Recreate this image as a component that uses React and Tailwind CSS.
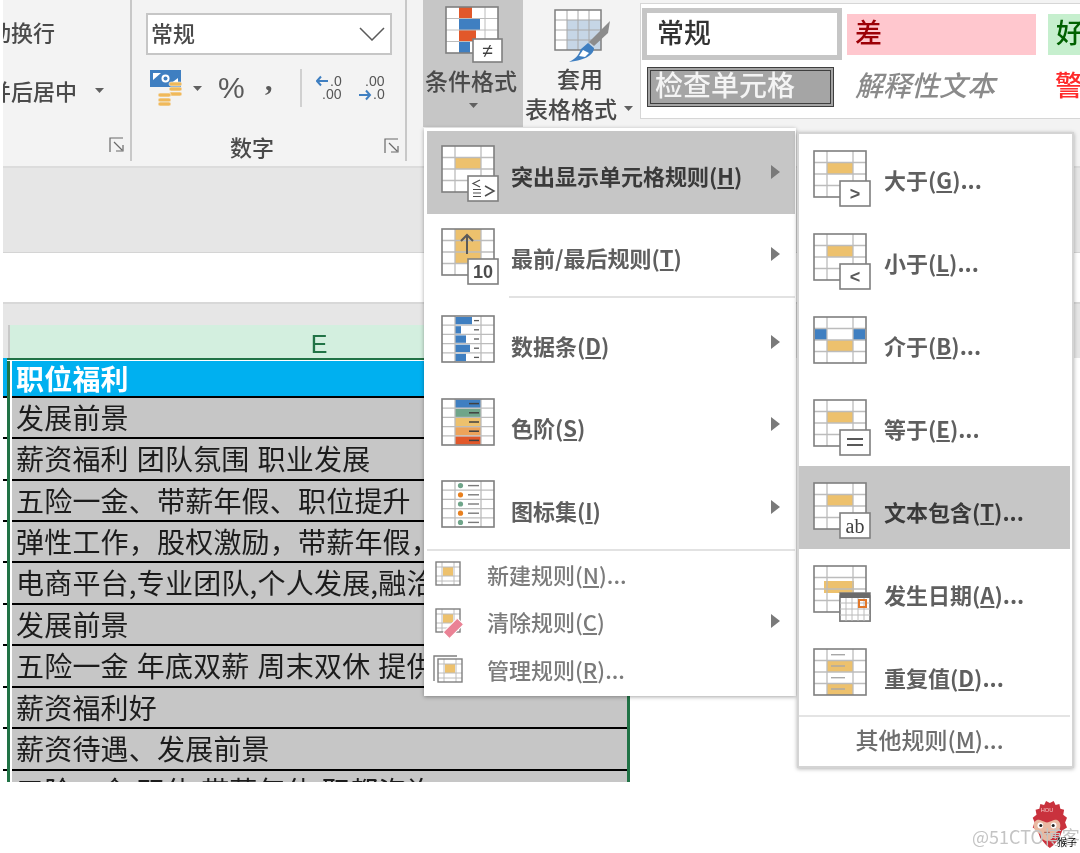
import React from "react";

const GRAY = "#7f7f7f", LINE = "#bcbcbc", OR = "#edc16d", BL = "#3f7fc1", RED = "#e2582a";
const SVGFONT = "'Liberation Sans', sans-serif";

function Grid({ rows = 4, children, over }) {
  const ys = Array.from({ length: rows - 1 }, (_, i) => ((i + 1) * 46) / rows);
  return (
    <svg width="60" height="60" viewBox="0 0 60 60" className="shrink-0 overflow-visible">
      <g transform="translate(1,4)">
        <rect x="0" y="0" width="52" height="46" fill="#fff" />
        {children && children[0]}
        {ys.map((y) => <line key={y} x1="0" x2="52" y1={y} y2={y} stroke={LINE} strokeWidth="1.3" />)}
        <line x1="13" x2="13" y1="0" y2="46" stroke={LINE} strokeWidth="1.3" />
        <line x1="39" x2="39" y1="0" y2="46" stroke={LINE} strokeWidth="1.3" />
        {children && children[1]}
        <rect x="0" y="0" width="52" height="46" fill="none" stroke={GRAY} strokeWidth="1.6" />
        {over && (
          <g>
            <rect x="26" y="30" width="30" height="25" fill="#fff" stroke={GRAY} strokeWidth="1.6" />
            {over}
          </g>
        )}
      </g>
    </svg>
  );
}

const Hl = <rect x="13" y="11.5" width="26" height="11.5" fill={OR} />;

const Glyph = ({ t, x = 41, y = 49, s = 17, fam, fw = 400, fill = "#4d4d4d" }) => (
  <text x={x} y={y} fontSize={s} fontFamily={fam || SVGFONT} fontWeight={fw} fill={fill} textAnchor="middle">{t}</text>
);

const IconHighlight = () => (
  <Grid over={<><path d="M38 34l-7 3.500 7 3.500M31 43.500h8M31 47h8M31 50.500h8" fill="none" stroke="#4d4d4d" strokeWidth="1.2" /><path d="M43 40l9 5-9 5" fill="none" stroke="#4d4d4d" strokeWidth="1.500" /></>}>
    {[Hl, null]}
  </Grid>
);
const IconTop = () => (
  <Grid over={<Glyph t="10" y={49} s={18} fw={700} />}>
    {[<rect key="a" x="13" y="0" width="26" height="35" fill={OR} />,
      <path key="b" d="M25 25V6M19 12l6-6 6 6" stroke="#595959" strokeWidth="2" fill="none" />]}
  </Grid>
);
const IconBars = () => (
  <Grid rows={5}>
    {[<g key="a">
        {[[17], [6], [11], [15], [11]].map(([w], i) => <rect key={i} x="13" y={i * 9.2 + 1} width={w} height="7.4" fill={BL} />)}
      </g>,
      <g key="b">{[0, 1, 2, 3, 4].map((i) => <line key={i} x1="32" x2="37" y1={i * 9.2 + 4.6} y2={i * 9.2 + 4.6} stroke="#595959" strokeWidth="1.3" />)}</g>]}
  </Grid>
);
const IconScale = () => (
  <Grid rows={5}>
    {[<g key="a">{[BL, "#6fa58a", OR, "#eda35a", RED].map((c, i) => <rect key={i} x="13" y={i * 9.2 + 0.5} width="26" height="8.4" fill={c} />)}</g>,
      <g key="b">{[0, 1, 2, 3, 4].map((i) => <line key={i} x1="27" x2="37" y1={i * 9.2 + 4.6} y2={i * 9.2 + 4.6} stroke="#404040" strokeWidth="1.5" />)}</g>]}
  </Grid>
);
const IconSets = () => (
  <Grid rows={5}>
    {[null,
      <g key="b">{["#6fa58a", "#e8801f", "#6fa58a", "#e8801f", "#6fa58a"].map((c, i) => (
        <g key={i}><circle cx="18.5" cy={i * 9.2 + 4.6} r="2.6" fill={c} /><line x1="26" x2="37" y1={i * 9.2 + 4.6} y2={i * 9.2 + 4.6} stroke="#7a7a7a" strokeWidth="1.4" /></g>
      ))}</g>]}
  </Grid>
);
const IconGt = ({ t }) => <Grid over={<Glyph t={t} y={49} s={18} fw={700} fill="#595959" />}>{[Hl, null]}</Grid>;
const IconEq = () => (
  <Grid over={<path d="M33 39h16M33 45h16" stroke="#595959" strokeWidth="1.8" />}>{[Hl, null]}</Grid>
);
const IconBetween = () => (
  <Grid>
    {[<g key="a"><rect x="1" y="11.5" width="12" height="11.5" fill={BL} /><rect x="39" y="11.5" width="12" height="11.5" fill={BL} /><rect x="13" y="23" width="26" height="11.5" fill={OR} /></g>, null]}
  </Grid>
);
const IconAb = () => (
  <Grid over={<Glyph t="ab" y={50} s={20} fam="'Liberation Serif', serif" fill="#404040" />}>{[Hl, null]}</Grid>
);
const IconDate = () => (
  <Grid over={<g>
    <rect x="26" y="27" width="30" height="28" fill="#fff" stroke={GRAY} strokeWidth="1.6" />
    <rect x="26" y="27" width="30" height="5" fill="#6b6b6b" />
    {[32, 38, 44, 50].map((x) => <line key={x} x1={x} x2={x} y1="32" y2="55" stroke={LINE} />)}
    {[37, 43, 49].map((y) => <line key={y} x1="26" x2="56" y1={y} y2={y} stroke={LINE} />)}
    <rect x="45" y="34" width="7" height="7" fill="none" stroke="#e2782a" strokeWidth="2" />
  </g>}>
    {[<rect key="a" x="10" y="15" width="30" height="12" fill={OR} />, null]}
  </Grid>
);
const IconDup = () => (
  <Grid>
    {[<g key="a"><rect x="13" y="11.5" width="26" height="11.5" fill={OR} /><rect x="13" y="34.5" width="26" height="11.5" fill={OR} /></g>,
      <g key="b">{[5.7, 17, 28.7, 40].map((y) => <line key={y} x1="17" x2="31" y1={y} y2={y} stroke="#a8a8a8" strokeWidth="1.4" />)}</g>]}
  </Grid>
);

const Small = ({ kind }) => (
  <svg width="30" height="30" viewBox="0 0 30 30" className="shrink-0 overflow-visible">
    {kind === "manage" && <path d="M1 27V2h23" fill="none" stroke={GRAY} strokeWidth="1.4" />}
    <g transform={kind === "manage" ? "translate(5,5)" : "translate(3,3)"}>
      <rect x="0" y="0" width="24" height="23" fill="#fff" />
      <rect x="7" y="5" width="10" height="9" fill={OR} />
      {[5, 14, 19].map((y) => <line key={y} x1="0" x2="24" y1={y} y2={y} stroke={LINE} />)}
      {[6, 18].map((x) => <line key={x} x1={x} x2={x} y1="0" y2="23" stroke={LINE} />)}
      <rect x="0" y="0" width="24" height="23" fill="none" stroke={GRAY} strokeWidth="1.4" />
    </g>
    {kind === "clear" && (
      <g transform="rotate(-45 20 22)">
        <rect x="10" y="18" width="20" height="9" rx="1" fill="#ea8295" stroke="#fff" />
      </g>
    )}
  </svg>
);

const Arrow = ({ cls = "" }) => (
  <svg width="9" height="14" viewBox="0 0 9 14" className={"shrink-0 " + cls}><path d="M0 0l9 7-9 7z" fill="#7a7a7a" /></svg>
);
const Caret = ({ cls = "" }) => (
  <svg width="9" height="5" viewBox="0 0 9 5" className={"shrink-0 " + cls}><path d="M0 0h9L4.5 5z" fill="#606060" /></svg>
);
const Launcher = ({ cls = "" }) => (
  <svg width="15" height="16" viewBox="0 0 15 16" className={"shrink-0 " + cls} fill="none" stroke="#6a6a6a" strokeWidth="1.2">
    <path d="M1 15V1h13" /><path d="M5 5l8 8M7 14h7V8" />
  </svg>
);

const Label = ({ t, u, after = ")..." }) => (
  <>{t}(<u>{u}</u>{after}</>
);

function Row1({ icon, label, active }) {
  return (
    <div className={"flex items-center h-[82.5px] shrink-0 pl-[14px] " + (active ? "bg-[#c6c6c6]" : "")}>
      {icon}
      <span className={"ml-[10px] pt-[5px] text-[22px] leading-none whitespace-nowrap " + (active ? "font-bold text-[#3a3a3a]" : "font-semibold text-[#5f5f5f]")}>{label}</span>
      <Arrow cls="ml-auto mr-[15px] -mt-[1px]" />
    </div>
  );
}
function RowSmall({ kind, label, arrow }) {
  return (
    <div className="flex items-center h-[47.3px] shrink-0 pl-[6px]">
      <Small kind={kind} />
      <span className="ml-[24px] text-[22px] leading-none text-[#7b7b7b] font-medium whitespace-nowrap">{label}</span>
      {arrow && <Arrow cls="ml-auto mr-[15px]" />}
    </div>
  );
}
function Row2({ icon, label, active }) {
  return (
    <div className={"flex items-center h-[83px] shrink-0 pl-[14px] mr-[2px] " + (active ? "bg-[#c6c6c6]" : "")}>
      <div className="mt-[3px] shrink-0">{icon}</div>
      <span className={"ml-[11px] pt-[7px] text-[22px] leading-none whitespace-nowrap " + (active ? "font-bold text-[#3a3a3a]" : "font-semibold text-[#5f5f5f]")}>{label}</span>
    </div>
  );
}

function SheetRow({ text, head }) {
  return (
    <div className={"flex shrink-0 " + (head ? "h-[36.7px]" : "h-[41.45px]")}>
      <div className={"w-[4px] border-b-2 border-black " + (head ? "bg-[#00b0f0]" : "")} />
      <div className="w-[2.5px] bg-[#217346]" />
      <div className="w-[2.5px] bg-white" />
      <div className={"w-[615px] pl-[4px] border-b-2 border-black text-[28px] tracking-[0.2px] [word-spacing:1.5px] whitespace-nowrap overflow-hidden " + (head ? "leading-[34px] bg-[#00b0f0] text-white font-bold" : "leading-[38px] bg-[#c6c6c6] text-[#1c1c1c]")}>{text}</div>
      <div className="w-[2.5px] bg-[#217346]" />
    </div>
  );
}

const rows = [
  "发展前景",
  "薪资福利 团队氛围 职业发展",
  "五险一金、带薪年假、职位提升",
  "弹性工作，股权激励，带薪年假，",
  "电商平台,专业团队,个人发展,融洽",
  "发展前景",
  "五险一金 年底双薪 周末双休 提供",
  "薪资福利好",
  "薪资待遇、发展前景",
  "五险一金 双休 带薪年休 职都咨询",
];

const CondIcon = () => (
  <svg width="58" height="56" viewBox="0 0 58 56" className="overflow-visible">
    <rect width="52" height="46" fill="#fff" />
    <rect x="13" y="0" width="13" height="11.5" fill={RED} />
    <rect x="13" y="11.5" width="21" height="11.5" fill={BL} />
    <rect x="13" y="23" width="17" height="11.5" fill={RED} />
    <rect x="13" y="34.5" width="11" height="11.5" fill={BL} />
    {[11.5, 23, 34.5].map((y) => <line key={y} x1="0" x2="52" y1={y} y2={y} stroke={LINE} />)}
    <line x1="39" x2="39" y1="0" y2="46" stroke={LINE} />
    <rect width="52" height="46" fill="none" stroke={GRAY} strokeWidth="1.6" />
    <rect x="27" y="32" width="29" height="23" fill="#fff" stroke={GRAY} strokeWidth="1.6" />
    <text x="41.5" y="50" fontSize="19" textAnchor="middle" fontFamily={SVGFONT} fill="#404040">≠</text>
  </svg>
);
const TableIcon = () => (
  <svg width="58" height="54" viewBox="0 0 58 54" className="overflow-visible">
    <rect width="46" height="40" fill="#fff" />
    <rect x="12" y="10" width="34" height="30" fill="#c6d6e6" />
    {[10, 20, 30].map((y) => <line key={y} x1="0" x2="46" y1={y} y2={y} stroke="#a8a8a8" />)}
    {[12, 23, 34].map((x) => <line key={x} x1={x} x2={x} y1="0" y2="40" stroke="#a8a8a8" />)}
    <rect width="46" height="40" fill="none" stroke={GRAY} strokeWidth="1.5" />
    <path d="M55 11l-2 12-14 13-5-4z" fill="#8c8c8c" />
    <path d="M33 33l6 5c0 6-7 12-25 14 8-4 10-8 12-13z" fill={BL} />
    <path d="M28 40l6 3-4 4-6-1z" fill="#fff" />
  </svg>
);
const Coins = () => (
  <svg width="33" height="38" viewBox="0 0 33 38" className="shrink-0">
    <rect x="0" y="1" width="31" height="17" fill="#3f7fc1" />
    <path d="M3 4h8L3 11zM28 15h-8l8-6z" fill="#fff" />
    <circle cx="15.5" cy="9.500" r="4" fill="#fff" />
    <circle cx="15.5" cy="9.500" r="2" fill="#3f7fc1" />
    {[13, 18, 23].map((y) => <rect key={y} x="19" y={y} width="13" height="4" rx="2" fill="#f0b95a" stroke="#f3f3f3" strokeWidth="0.6" />)}
    {[24, 29, 33].map((y) => <rect key={y} x="8" y={y} width="13" height="4" rx="2" fill="#f0b95a" stroke="#f3f3f3" strokeWidth="0.6" />)}
  </svg>
);
const DecUp = () => (
  <svg width="30" height="30" viewBox="0 0 30 30" className="shrink-0">
    <path d="M1 8h11M5 3.5L1 8l4 4.500" fill="none" stroke={BL} strokeWidth="2" />
    <text x="14" y="13" fontSize="14" fontFamily={SVGFONT} fill="#555">.0</text>
    <text x="6" y="26" fontSize="14" fontFamily={SVGFONT} fill="#555">.00</text>
  </svg>
);
const DecDown = () => (
  <svg width="30" height="30" viewBox="0 0 30 30" className="shrink-0">
    <text x="6" y="13" fontSize="14" fontFamily={SVGFONT} fill="#555">.00</text>
    <path d="M0 22h11M7 17.500l4 4.500-4 4.500" fill="none" stroke={BL} strokeWidth="2" />
    <text x="14" y="26" fontSize="14" fontFamily={SVGFONT} fill="#555">.0</text>
  </svg>
);
const Monkey = () => (
  <svg width="40" height="49" viewBox="0 0 42 50" preserveAspectRatio="none">
    <path d="M21 0l3 3 4-2 2 4 4-1 1 5 4 1-1 5 4 3-2 5 2 5-5 3-3 8-6 7-4 3-4-3-6-7-3-8-5-3 2-5-2-5 4-3-1-5 4-1 1-5 4 1 2-4 4 2z" fill="#c9323d" />
    <path d="M7 26c0-5 5-7 8-5 3 1 4 2 6 2s3-1 6-2c3-2 8 0 8 5 0 5-4 7-7 9-1 4-4 7-7 7s-6-3-7-7c-3-2-7-4-7-9z" fill="#e9b9a2" />
    <circle cx="14" cy="26" r="3" fill="#fff" /><circle cx="28" cy="26" r="3" fill="#fff" />
    <circle cx="14.500" cy="26" r="1.600" fill="#222" /><circle cx="27.500" cy="26" r="1.600" fill="#222" />
    <path d="M18 33h6M21 33v3" stroke="#a5554c" strokeWidth="1" />
    <text x="21" y="12" textAnchor="middle" fontSize="6" fill="#f4c6c6" fontFamily={SVGFONT}>HOU</text>
  </svg>
);

export default function App() {
  return (
    <div className="relative w-[1080px] h-[853px] bg-white overflow-hidden blur-[0.5px] font-['Noto_Sans_CJK_SC',sans-serif]">
      <div className="flex flex-col h-[782px] pl-[3px] overflow-hidden">
        {/* Ribbon */}
        <div className="flex h-[168px] shrink-0 bg-[#f3f3f3] border-b-2 border-[#dcdcdc] text-[#4a4a4a] font-medium">
          <div className="w-[127px] shrink-0 flex flex-col overflow-hidden pt-[6px] text-[22px] leading-none">
            <div className="h-[50px] flex items-center -ml-[36px] whitespace-nowrap">自动换行</div>
            <div className="h-[50px] mt-[9px] flex items-center -ml-[36px] whitespace-nowrap">合并后居中<Caret cls="ml-[18px]" /></div>
            <div className="mt-[22px] flex justify-end pr-[6px]"><Launcher /></div>
          </div>
          <div className="w-[277px] shrink-0 h-[161px] border-l-2 border-r-2 border-[#c8c8c8] pt-[13px] pl-[14px] flex flex-col">
            <div className="w-[246px] h-[43px] bg-white border-2 border-[#c6c6c6] flex items-center pl-[3px] pr-[5px] pb-[5px] text-[22px] leading-none">
              常规
              <svg width="26" height="14" viewBox="0 0 26 14" className="ml-auto mt-[5px]"><path d="M1 1l12 12L25 1" fill="none" stroke="#5a5a5a" strokeWidth="1.5" /></svg>
            </div>
            <div className="flex items-center h-[40px] mt-[14px] pl-[4px]">
              <Coins />
              <Caret cls="ml-[10px]" />
              <span className="ml-[16px] w-[30px] text-[30px] leading-none text-[#5a5a5a] font-['Liberation_Sans',sans-serif]">%</span>
              <span className="ml-[17px] w-[8px] text-[30px] leading-none font-bold text-[#5a5a5a] font-['Liberation_Serif',serif] -mt-[16px]">,</span>
              <div className="ml-[27px] w-[2px] h-[38px] bg-[#d0d0d0]" />
              <div className="ml-[14px]"><DecUp /></div>
              <div className="ml-[13px]"><DecDown /></div>
            </div>
            <div className="flex items-center h-[30px] mt-[24px]">
              <span className="ml-[84px] text-[22px] leading-none">数字</span>
              <Launcher cls="ml-auto mr-[6px] -mt-[1px]" />
            </div>
          </div>
          <div className="w-[16px] shrink-0" />
          <div className="w-[100px] h-[127px] shrink-0 bg-[#c6c6c6] flex flex-col items-center">
            <div className="mt-[7px] ml-[3px] h-[56px]"><CondIcon /></div>
            <span className="mt-[2px] pr-[4px] text-[23px] leading-[30px] whitespace-nowrap">条件格式</span>
            <Caret cls="mt-[8px]" />
          </div>
          <div className="w-[117px] h-[127px] shrink-0 flex flex-col pl-[2px]">
            <div className="mt-[10px] ml-[30px] h-[54px]"><TableIcon /></div>
            <span className="pl-[32px] text-[23px] leading-[30px] -mt-[1px]">套用</span>
            <div className="flex items-center text-[23px] leading-[30px] whitespace-nowrap">表格格式<Caret cls="ml-[7px]" /></div>
          </div>
          <div className="flex-1 h-[116px] mt-[3px] bg-white border border-r-0 border-[#d6d6d6] flex flex-col">
            <div className="flex items-center mt-[4px] h-[52px] text-[27px] leading-none pb-0">
              <div className="w-[200px] h-[52px] ml-[1px] border-[5px] border-[#c6c6c6] flex items-center pl-[10px] pb-[6px] text-[#333]">常规</div>
              <div className="w-[189px] h-[41px] ml-[5px] bg-[#ffc7ce] flex items-center pl-[8px] pb-[6px] text-[#9c0006]">差</div>
              <div className="flex-1 h-[41px] ml-[12px] bg-[#c6efce] flex items-center pl-[8px] pb-[6px] text-[#006100] whitespace-nowrap overflow-hidden">好</div>
            </div>
            <div className="flex items-center mt-[7px] h-[40px] text-[28px] leading-none">
              <div className="w-[187px] h-[40px] ml-[6px] bg-[#a5a5a5] border-[4px] border-double border-[#3f3f3f] flex items-center pl-[4px] pb-[6px] text-[#f4f4f4] whitespace-nowrap">检查单元格</div>
              <div className="w-[200px] ml-[21px] pb-[6px] italic text-[#8a8a8a] whitespace-nowrap">解释性文本</div>
              <div className="pb-[6px] text-[#ff2b2b] whitespace-nowrap overflow-hidden">警</div>
            </div>
          </div>
        </div>
        {/* Bars */}
        <div className="h-[85px] shrink-0 bg-[#e6e6e6] border-b border-[#d4d4d4]" />
        <div className="h-[51px] shrink-0 bg-white border-b-2 border-[#d8d8d8]" />
        {/* Column header */}
        <div className="h-[54px] shrink-0 bg-[#e6e6e6] pt-[21px] pl-[5px] flex">
          <div className="w-[620px] h-[33px] bg-[#d3efdf] border-l-2 border-[#c8c8c8] flex items-center justify-center text-[25px] leading-none text-[#217346] font-normal font-['Liberation_Sans',sans-serif] pt-[6px]">E</div>
        </div>
        {/* Sheet */}
        <div className="flex flex-col">
          <div className="flex h-[3px] shrink-0">
            <div className="w-[4px] bg-[#00b0f0]" />
            <div className="w-[622.500px]"><div className="h-[2px] bg-[#217346]" /><div className="h-[1px] ml-[2.500px] bg-white" /></div>
          </div>
          <SheetRow head text="职位福利" />
          {rows.map((t, i) => <SheetRow key={i} text={t} />)}
        </div>
      </div>

      {/* Conditional formatting menu */}
      <div className="absolute left-[424px] top-[128px] w-[372px] h-[568px] bg-white border-[3px] border-r border-b-0 border-white shadow-[0_1px_4px_rgba(0,0,0,0.35)] flex flex-col">
        <Row1 active icon={<IconHighlight />} label={<Label t="突出显示单元格规则" u="H" after=")" />} />
        <Row1 icon={<IconTop />} label={<Label t="最前/最后规则" u="T" after=")" />} />
        <div className="h-[2px] ml-[82px] mb-[3px] bg-[#e2e2e2] shrink-0" />
        <Row1 icon={<IconBars />} label={<Label t="数据条" u="D" after=")" />} />
        <Row1 icon={<IconScale />} label={<Label t="色阶" u="S" after=")" />} />
        <Row1 icon={<IconSets />} label={<Label t="图标集" u="I" after=")" />} />
        <div className="h-[2px] bg-[#e2e2e2] shrink-0" />
        <RowSmall kind="new" label={<Label t="新建规则" u="N" />} />
        <RowSmall kind="clear" arrow label={<Label t="清除规则" u="C" after=")" />} />
        <RowSmall kind="manage" label={<Label t="管理规则" u="R" />} />
      </div>

      {/* Submenu */}
      <div className="absolute left-[797px] top-[132px] w-[277px] h-[636px] bg-white border-2 border-[#d4d4d4] shadow-[0_1px_4px_rgba(0,0,0,0.3)] flex flex-col">
        <Row2 icon={<IconGt t=">" />} label={<Label t="大于" u="G" />} />
        <Row2 icon={<IconGt t="<" />} label={<Label t="小于" u="L" />} />
        <Row2 icon={<IconBetween />} label={<Label t="介于" u="B" />} />
        <Row2 icon={<IconEq />} label={<Label t="等于" u="E" />} />
        <Row2 active icon={<IconAb />} label={<Label t="文本包含" u="T" />} />
        <Row2 icon={<IconDate />} label={<Label t="发生日期" u="A" />} />
        <Row2 icon={<IconDup />} label={<Label t="重复值" u="D" />} />
        <div className="h-[2px] mr-[2px] bg-[#e4e4e4] shrink-0" />
        <div className="flex-1 flex items-center justify-center text-[23px] leading-none text-[#6e6e6e] font-medium pr-[12px] pb-[4px]"><span><Label t="其他规则" u="M" /></span></div>
      </div>

      {/* Watermark */}
      <div className="absolute left-[1027px] top-[800px]"><Monkey /></div>
      <span className="absolute left-[972px] top-[825px] text-[18px] leading-[22px] text-[#c4c4c4] whitespace-nowrap">@51CTO博客</span>
      <span className="absolute left-[1057px] top-[836px] text-[10px] leading-[12px] text-black whitespace-nowrap">猴子</span>
    </div>
  );
}
